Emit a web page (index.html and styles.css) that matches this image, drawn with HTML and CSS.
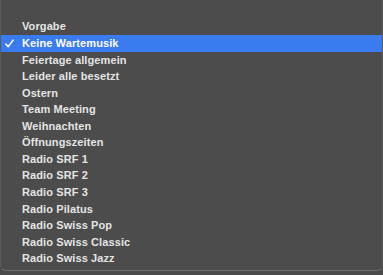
FILE: index.html
```html
<!DOCTYPE html>
<html lang="de">
<head>
<meta charset="utf-8">
<link rel="stylesheet" href="styles.css">
</head>
<body>
<div class="menu">
  <ul class="list">
    <li class="item">Vorgabe</li>
    <li class="item selected"><span class="check"><svg width="9" height="9" viewBox="0 0 9 9"><path d="M1 5.2 L3.3 7.6 L8 1.2" fill="none" stroke="#fff" stroke-width="1.6" stroke-linecap="round" stroke-linejoin="round"/></svg></span>Keine Wartemusik</li>
    <li class="item">Feiertage allgemein</li>
    <li class="item">Leider alle besetzt</li>
    <li class="item">Ostern</li>
    <li class="item">Team Meeting</li>
    <li class="item">Weihnachten</li>
    <li class="item">Öffnungszeiten</li>
    <li class="item">Radio SRF 1</li>
    <li class="item">Radio SRF 2</li>
    <li class="item">Radio SRF 3</li>
    <li class="item">Radio Pilatus</li>
    <li class="item">Radio Swiss Pop</li>
    <li class="item">Radio Swiss Classic</li>
    <li class="item">Radio Swiss Jazz</li>
  </ul>
</div>
</body>
</html>
```
FILE: styles.css
```css
html, body {
  margin: 0;
  padding: 0;
  background: #4a4a4a;
  width: 383px;
  height: 275px;
  overflow: hidden;
}
.menu {
  background: #4c4c4c;
  border-left: 1px solid #5a5a5a;
  border-bottom: 1px solid #6e6e6e;
  border-right: 1px solid #5a5a5a;
  border-radius: 0 0 6px 6px;
  height: 271px;
  box-sizing: border-box;
  padding-top: 18.4px;
  font-family: "Liberation Sans", Arial, sans-serif;
  font-weight: bold;
  font-size: 11px;
  letter-spacing: 0.1px;
  color: #e4e4e4;
}
.list {
  list-style: none;
  margin: 0;
  padding: 0;
}
.item {
  position: relative;
  height: 16.57px;
  line-height: 17.5px;
  padding-left: 21px;
  white-space: nowrap;
}
.selected {
  background: #3a7cf0;
  color: #ffffff;
}
.check {
  position: absolute;
  left: 4px;
  top: 4px;
  width: 9px;
  height: 9px;
  display: flex;
}
```
